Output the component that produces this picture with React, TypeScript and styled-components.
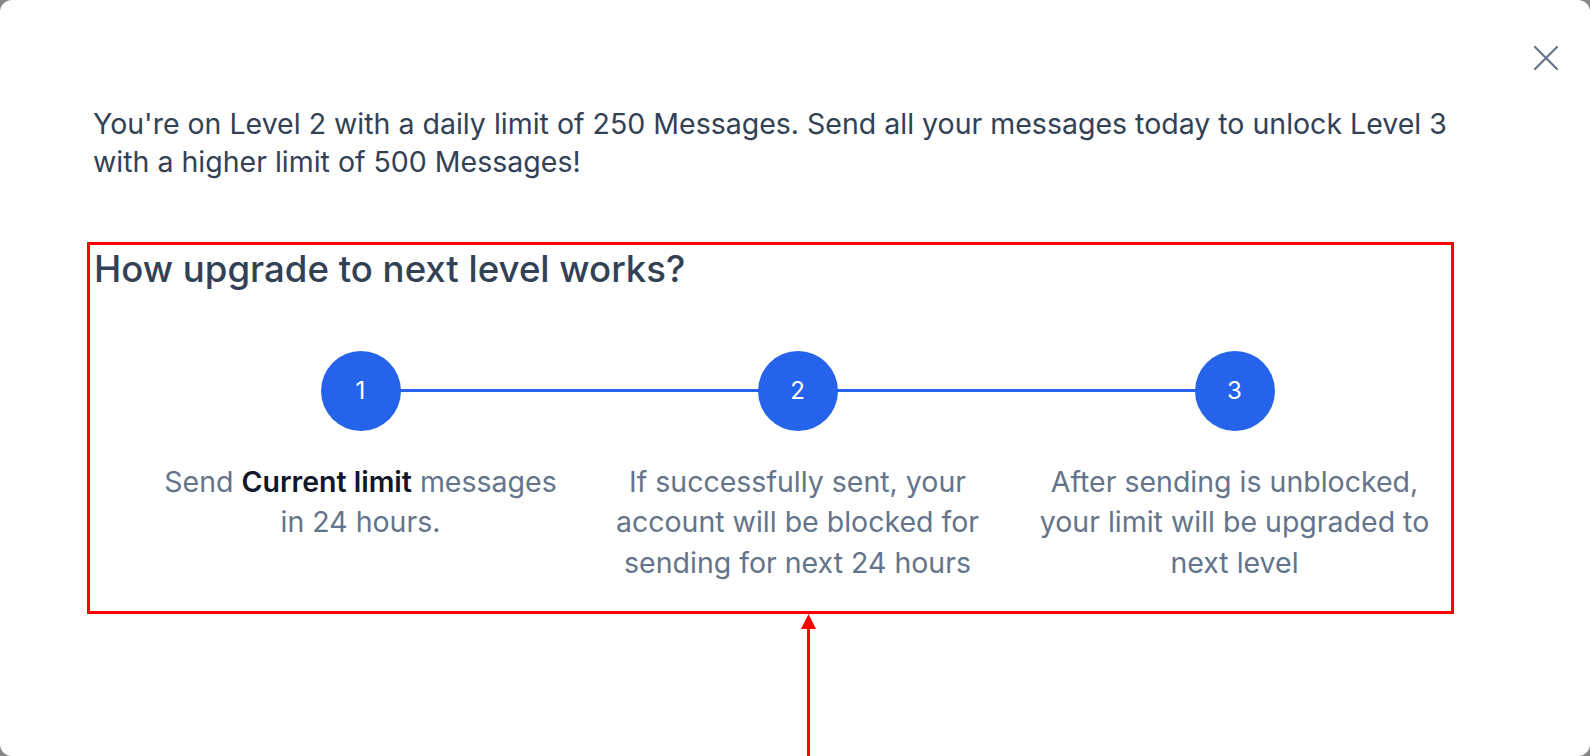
import React from 'react';
import styled, { createGlobalStyle } from 'styled-components';

const GlobalStyle = createGlobalStyle`
  html, body {
    margin: 0;
    padding: 0;
    background: #878787;
    font-family: Inter, "Noto Sans", sans-serif;
  }
`;

const Modal = styled.div`
  position: relative;
  box-sizing: border-box;
  width: 1590px;
  height: 756px;
  background: #ffffff;
  border-radius: 12px;
  overflow: hidden;
  padding: 105px 0 0 93px;
`;

const CloseButton = styled.button`
  position: absolute;
  top: 46px;
  right: 32px;
  width: 24px;
  height: 24px;
  padding: 0;
  border: 0;
  background: transparent;
  cursor: pointer;
  display: flex;
  align-items: center;
  justify-content: center;
`;

const Intro = styled.p`
  margin: 0;
  max-width: 1385px;
  font-size: 28.5px;
  line-height: 38.4px;
  color: #334155;
`;

const Section = styled.section`
  box-sizing: border-box;
  width: 1353px;
  height: 358px;
  margin: 67px 0 0 1px;
  outline: 3px solid #ff0000;
  outline-offset: 4px;
`;

const Heading = styled.h2`
  margin: 0;
  font-size: 36.6px;
  line-height: 40px;
  font-weight: 500;
  color: #334155;
`;

const Steps = styled.ol`
  list-style: none;
  display: grid;
  grid-template-columns: repeat(3, 437px);
  margin: 62px 0 0 48px;
  padding: 0;
`;

const Step = styled.li`
  display: flex;
  flex-direction: column;
  align-items: center;
`;

const Track = styled.div<{ $first?: boolean; $last?: boolean }>`
  position: relative;
  align-self: stretch;
  display: flex;
  justify-content: center;

  &::before,
  &::after {
    content: '';
    position: absolute;
    top: 38px;
    height: 3px;
    width: 50%;
    background: #2563eb;
  }

  &::before {
    left: 0;
    display: ${(p) => (p.$first ? 'none' : 'block')};
  }

  &::after {
    right: 0;
    display: ${(p) => (p.$last ? 'none' : 'block')};
  }
`;

const Circle = styled.span`
  position: relative;
  z-index: 1;
  width: 80px;
  height: 80px;
  border-radius: 50%;
  background: #2563eb;
  color: #ffffff;
  font-size: 24px;
  display: flex;
  align-items: center;
  justify-content: center;
`;

const StepText = styled.p`
  margin: 31px 0 0;
  max-width: 410px;
  text-align: center;
  font-size: 28.5px;
  line-height: 40.5px;
  color: #64748b;

  strong {
    font-weight: 600;
    color: #0f172a;
  }
`;

const Arrow = styled.svg`
  position: absolute;
  left: 800px;
  top: 614px;
`;

const steps: React.ReactNode[] = [
  <>
    Send <strong>Current limit</strong> messages in 24 hours.
  </>,
  <>If successfully sent, your account will be blocked for sending for next 24 hours</>,
  <>After sending is unblocked, your limit will be upgraded to next level</>,
];

const App = () => {
  return (
    <>
      <GlobalStyle />
      <Modal>
        <CloseButton type="button" aria-label="Close">
          <svg width="24" height="24" viewBox="0 0 24 24" fill="none">
            <path d="M1 1L23 23M23 1L1 23" stroke="#64748b" strokeWidth="2.2" strokeLinecap="round" />
          </svg>
        </CloseButton>

        <Intro>
          You're on Level 2 with a daily limit of 250 Messages. Send all your messages today to unlock Level 3
          with a higher limit of 500 Messages!
        </Intro>

        <Section>
          <Heading>How upgrade to next level works?</Heading>
          <Steps>
            {steps.map((text, i) => (
              <Step key={i}>
                <Track $first={i === 0} $last={i === steps.length - 1}>
                  <Circle>{i + 1}</Circle>
                </Track>
                <StepText>{text}</StepText>
              </Step>
            ))}
          </Steps>
        </Section>

        <Arrow width="17" height="142" viewBox="0 0 17 142">
          <polygon points="8.5,0 1,15 16,15" fill="#ff0000" />
          <rect x="7" y="14" width="3" height="128" fill="#ff0000" />
        </Arrow>
      </Modal>
    </>
  );
};

export default App;
